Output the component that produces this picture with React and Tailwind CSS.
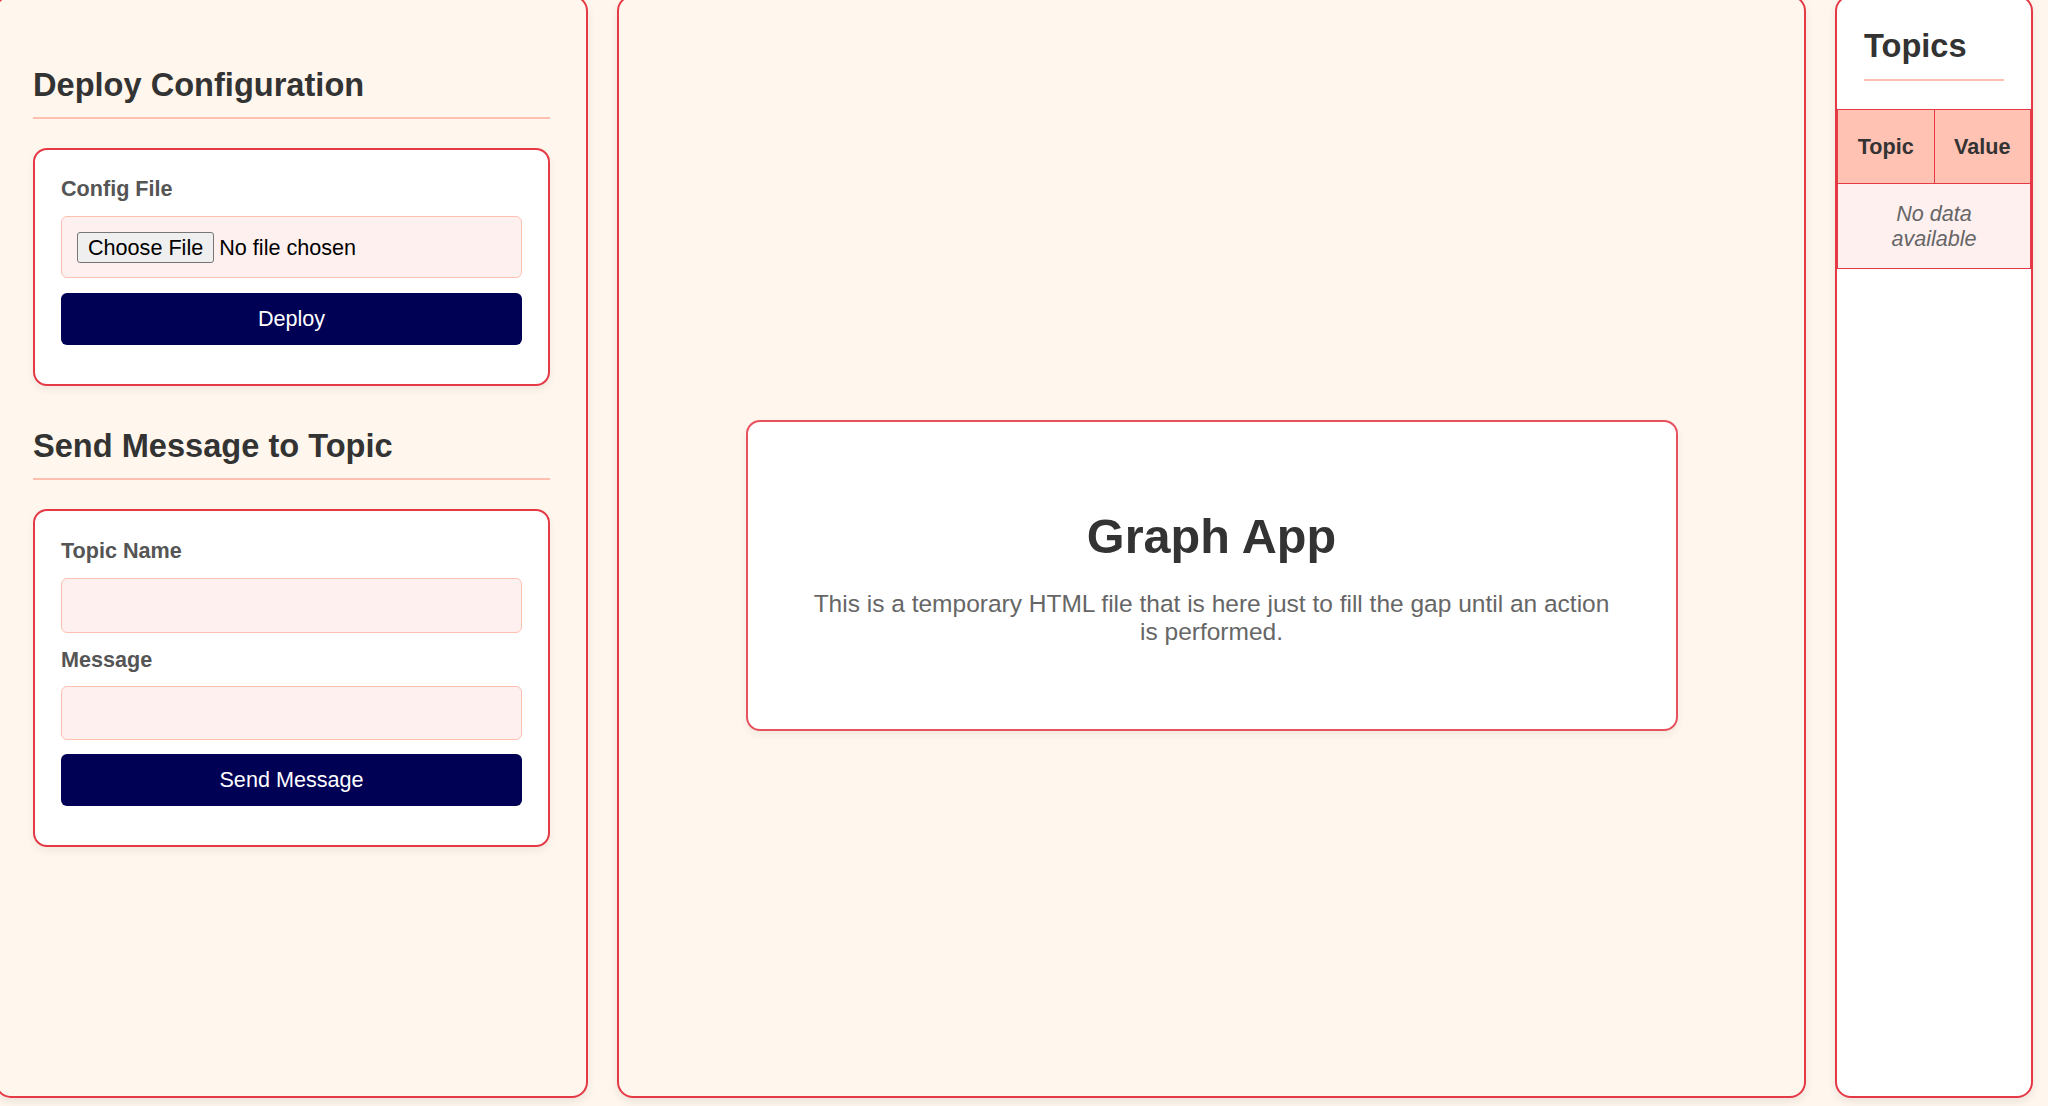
export default function App() {
    return (
        <div className="h-[1106px] overflow-hidden bg-[#fff7ed] font-['Liberation_Sans',Arial,sans-serif]">
            <div className="flex -mt-[5px] -ml-[5px] h-[1103px] gap-[29px]">
                {/* Left column: forms */}
                <div className="w-[593px] shrink-0 bg-[#fff7ed] border-2 border-[#e63946] rounded-[16px] px-[36px] pt-[69px] shadow-[0_4px_8px_rgba(0,0,0,0.08)]">
                    <h2 className="text-[32.6px] leading-[37px] font-bold text-[#333] pb-[14px] border-b-2 border-[#ffbfae]">
                        Deploy Configuration
                    </h2>
                    <div className="mt-[29px] bg-white border-2 border-[#e63946] rounded-[14px] px-[26px] pt-[26px] pb-[39px] shadow-[0_4px_8px_rgba(0,0,0,0.06)]">
                        <label className="block text-[21.6px] leading-[25px] font-bold text-[#555] mb-[15px]">Config File</label>
                        <div className="h-[62px] flex items-center px-[15px] bg-[#fff0f0] border border-[#ffc0b0] rounded-[6px]">
                            <span className="h-[31px] flex items-center px-[10px] bg-[#efefef] border border-[#767676] rounded-[3px] text-black text-[21.6px] leading-[25px]">
                                Choose File
                            </span>
                            <span className="ml-[5px] text-black text-[21.6px] leading-[25px]">No file chosen</span>
                        </div>
                        <button className="mt-[15px] w-full h-[52px] bg-[#000055] text-white text-[21.6px] rounded-[6px]">
                            Deploy
                        </button>
                    </div>

                    <h2 className="mt-[41px] text-[32.6px] leading-[37px] font-bold text-[#333] pb-[14px] border-b-2 border-[#ffbfae]">
                        Send Message to Topic
                    </h2>
                    <div className="mt-[29px] bg-white border-2 border-[#e63946] rounded-[14px] px-[26px] pt-[27px] pb-[39px] shadow-[0_4px_8px_rgba(0,0,0,0.06)]">
                        <label className="block text-[21.6px] leading-[25px] font-bold text-[#555] mb-[15px]">Topic Name</label>
                        <input type="text" className="block w-full h-[55px] px-[13px] bg-[#fff0f0] border border-[#ffc0b0] rounded-[6px] text-[21.6px] outline-none" />
                        <label className="block mt-[14px] text-[21.6px] leading-[25px] font-bold text-[#555] mb-[14px]">Message</label>
                        <input type="text" className="block w-full h-[54px] px-[13px] bg-[#fff0f0] border border-[#ffc0b0] rounded-[6px] text-[21.6px] outline-none" />
                        <button className="mt-[14px] w-full h-[52px] bg-[#000055] text-white text-[21.6px] rounded-[6px]">
                            Send Message
                        </button>
                    </div>
                </div>

                {/* Middle column: graph placeholder */}
                <div className="w-[1189px] shrink-0 bg-[#fff7ed] border-2 border-[#e63946] rounded-[16px] flex items-center justify-center pt-[58px] shadow-[0_4px_8px_rgba(0,0,0,0.08)]">
                    <div className="w-[932px] bg-white border-2 border-[#e8525e] rounded-[14px] px-[57px] pt-[86px] pb-[83px] text-center shadow-[0_4px_8px_rgba(0,0,0,0.06)]">
                        <h1 className="text-[48.6px] leading-[56px] font-bold text-[#333]">Graph App</h1>
                        <p className="mt-[26px] text-[24.5px] leading-[28px] text-[#666]">
                            This is a temporary HTML file that is here just to fill the gap until an action is performed.
                        </p>
                    </div>
                </div>

                {/* Right column: topics table */}
                <div className="w-[198px] shrink-0 bg-white border-2 border-[#e63946] rounded-[16px] pt-[30px] overflow-hidden shadow-[0_4px_8px_rgba(0,0,0,0.08)]">
                    <h2 className="mx-[27px] text-[32.6px] leading-[37px] font-bold text-[#333] pb-[15px] border-b-2 border-[#ffbfae]">
                        Topics
                    </h2>
                    <table className="mt-[28px] w-full table-fixed border-collapse">
                        <thead>
                            <tr>
                                <th className="border border-[#e63946] bg-[#ffc2b3] py-[24px] text-[21.6px] leading-[25px] font-bold text-[#333]">Topic</th>
                                <th className="border border-[#e63946] bg-[#ffc2b3] py-[24px] text-[21.6px] leading-[25px] font-bold text-[#333]">Value</th>
                            </tr>
                        </thead>
                        <tbody>
                            <tr>
                                <td colSpan={2} className="border border-[#e63946] bg-[#fff0f0] py-[17px] px-[16px] text-center italic text-[21.6px] leading-[25px] text-[#666]">
                                    No data available
                                </td>
                            </tr>
                        </tbody>
                    </table>
                </div>
            </div>
        </div>
    );
}
